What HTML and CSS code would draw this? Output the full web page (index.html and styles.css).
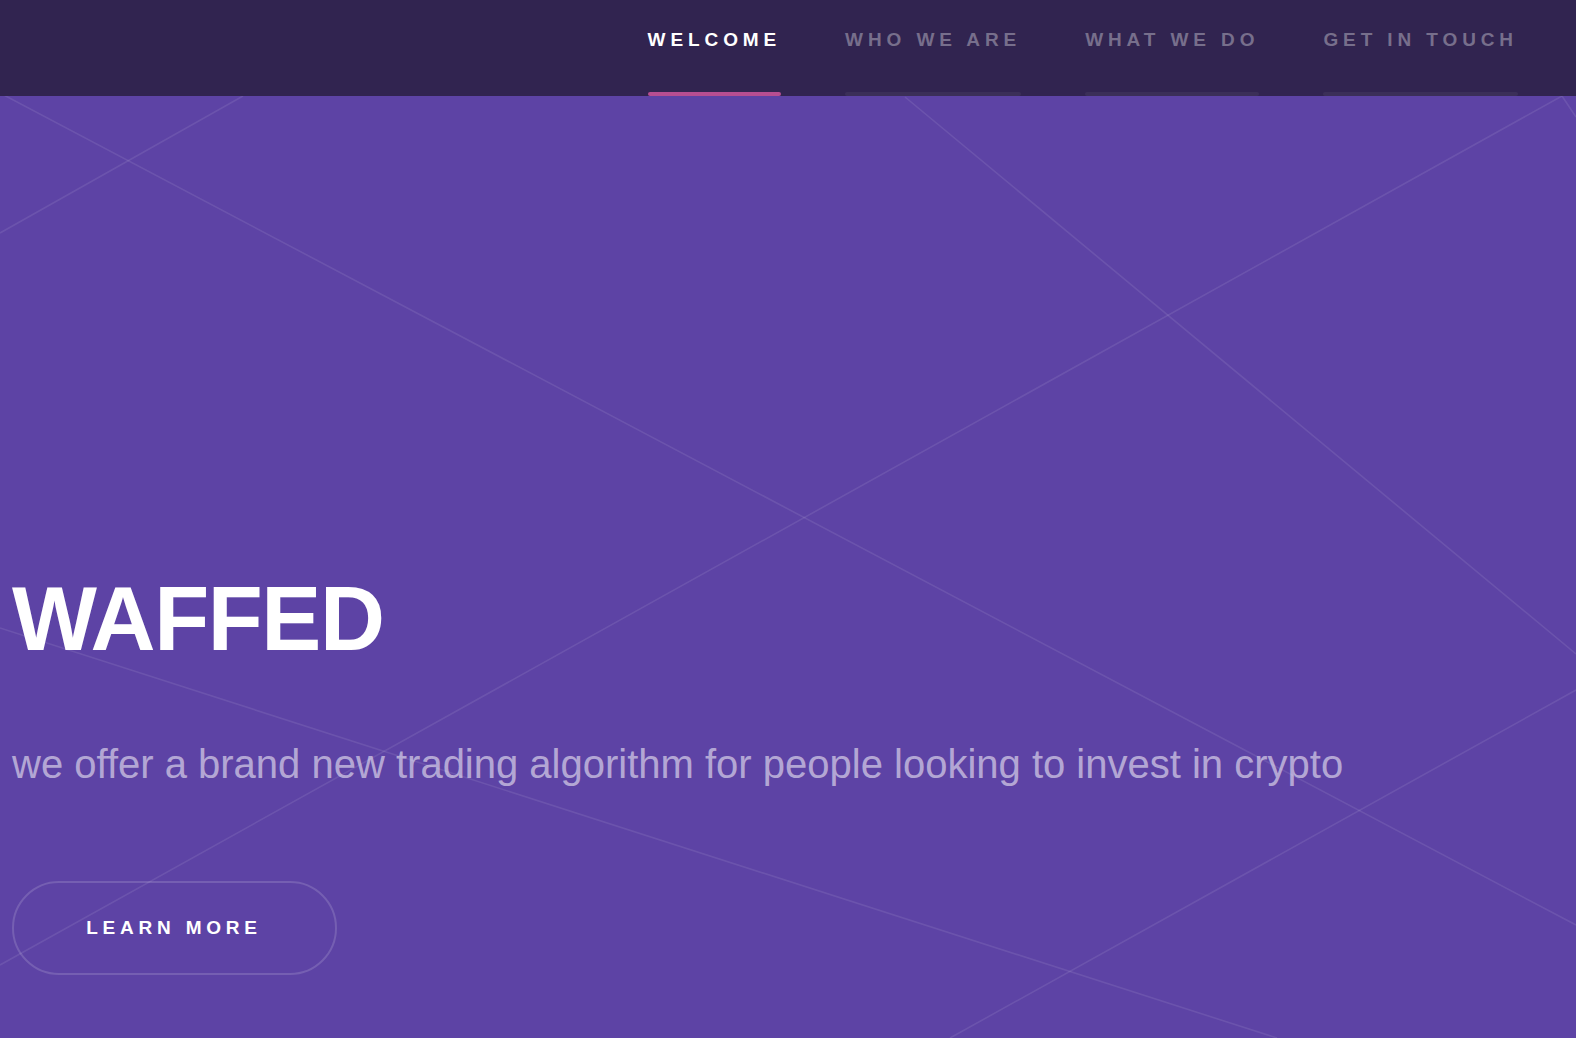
FILE: index.html
```html
<!DOCTYPE html>
<html lang="en">
<head>
<meta charset="utf-8">
<title>Waffed</title>
<link rel="stylesheet" href="styles.css">
</head>
<body>
<header class="topbar">
  <nav class="nav">
    <a class="nav-item active" href="#intro"><span class="nav-label">Welcome</span><span class="nav-bar"></span></a>
    <a class="nav-item" href="#one"><span class="nav-label">Who we are</span><span class="nav-bar"></span></a>
    <a class="nav-item" href="#two"><span class="nav-label">What we do</span><span class="nav-bar"></span></a>
    <a class="nav-item" href="#three"><span class="nav-label">Get in touch</span><span class="nav-bar"></span></a>
  </nav>
</header>
<section class="intro" id="intro">
  <svg class="intro-lines" width="1576" height="942" viewBox="0 0 1576 942" aria-hidden="true">
    <line x1="0" y1="-3" x2="1576" y2="829"/>
    <line x1="243" y1="0" x2="0" y2="137"/>
    <line x1="905" y1="1" x2="1576" y2="558"/>
    <line x1="1562" y1="0" x2="0" y2="869"/>
    <line x1="0" y1="532" x2="1277" y2="942"/>
    <line x1="1576" y1="594" x2="950" y2="942"/>
    <line x1="1562" y1="0" x2="1576" y2="21"/>
  </svg>
  <div class="intro-inner">
    <h1 class="intro-title">WAFFED</h1>
    <p class="intro-text">we offer a brand new trading algorithm for people looking to invest in crypto</p>
    <a class="button" href="#one">Learn more</a>
  </div>
</section>
</body>
</html>
```

FILE: styles.css
```css
html, body {
  margin: 0;
  padding: 0;
}

body {
  background: #5d43a5;
  font-family: "Liberation Sans", Arial, Helvetica, sans-serif;
  color: rgba(255, 255, 255, 0.55);
  overflow: hidden;
}

.topbar {
  height: 96px;
  background: #312450;
  display: flex;
  justify-content: flex-end;
}

.nav {
  display: flex;
  gap: 64px;
  margin-right: 58px;
}

.nav-item {
  display: flex;
  flex-direction: column;
  justify-content: space-between;
  height: 96px;
  padding-top: 30px;
  box-sizing: border-box;
  text-decoration: none;
  color: rgba(255, 255, 255, 0.35);
  font-size: 19px;
  line-height: 19px;
  font-weight: bold;
  letter-spacing: 4.9px;
  text-transform: uppercase;
}

.nav-item.active {
  color: #ffffff;
}

.nav-bar {
  display: block;
  height: 4px;
  border-radius: 2px;
  background: rgba(255, 255, 255, 0.05);
}

.nav-item.active .nav-bar {
  background: #b74e91;
}

.intro {
  position: relative;
  height: 942px;
  overflow: hidden;
  background: #5d43a5;
}

.intro-lines {
  position: absolute;
  left: 0;
  top: 0;
  pointer-events: none;
}

.intro-lines line {
  stroke: rgba(255, 255, 255, 0.09);
  stroke-width: 1.6;
}

.intro-inner {
  position: relative;
  padding: 473px 0 0 12px;
  display: flex;
  flex-direction: column;
  align-items: flex-start;
}

.intro-title {
  margin: 0;
  font-size: 90px;
  line-height: 100px;
  font-weight: bold;
  letter-spacing: -1.4px;
  color: #ffffff;
}

.intro-text {
  margin: 71px 0 0 0;
  font-size: 40px;
  line-height: 48px;
  color: rgba(255, 255, 255, 0.55);
}

.button {
  margin-top: 93px;
  width: 325px;
  height: 94px;
  box-sizing: border-box;
  border: 2px solid rgba(255, 255, 255, 0.15);
  border-radius: 47px;
  display: flex;
  align-items: center;
  justify-content: center;
  padding-right: 1px;
  color: #ffffff;
  text-decoration: none;
  text-transform: uppercase;
  font-size: 19px;
  font-weight: bold;
  letter-spacing: 4.8px;
}
```
